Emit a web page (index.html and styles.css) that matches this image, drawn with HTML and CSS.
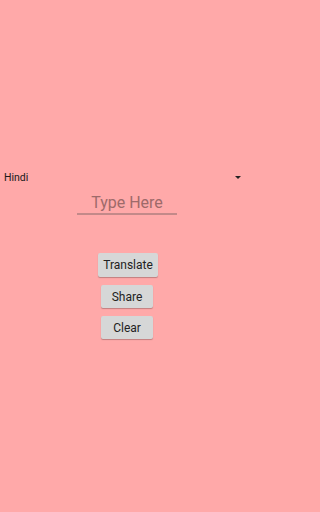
FILE: index.html
```html
<!DOCTYPE html>
<html>
<head>
<meta charset="utf-8">
<link rel="stylesheet" href="styles.css">
</head>
<body>
<div class="screen">
  <div class="spinner">
    <span class="spinner-label">Hindi</span>
    <span class="spinner-arrow"></span>
  </div>
  <div class="field">Type Here</div>
  <div class="actions">
    <button class="btn btn-wide">Translate</button>
    <button class="btn">Share</button>
    <button class="btn">Clear</button>
  </div>
</div>
</body>
</html>
```
FILE: styles.css
```css
html, body {
  margin: 0;
  padding: 0;
  background: #ffa9a9;
}
.screen {
  width: 254px;
  height: 512px;
  background: #ffa9a9;
  font-family: Roboto, "Liberation Sans", sans-serif;
  display: flex;
  flex-direction: column;
  padding-top: 168px;
  box-sizing: border-box;
}
.spinner {
  height: 20px;
  display: flex;
  align-items: center;
  justify-content: space-between;
  padding: 0 13px 0 4px;
}
.spinner-label {
  font-size: 10.5px;
  color: #1a1a1a;
  line-height: 20px;
}
.spinner-arrow {
  width: 0;
  height: 0;
  border-left: 3px solid transparent;
  border-right: 3px solid transparent;
  border-top: 3px solid #222;
  margin-top: -1px;
}
.field {
  width: 100px;
  margin: 4px auto 0;
  height: 21px;
  line-height: 21px;
  font-size: 16px;
  text-align: center;
  color: #9e6a6a;
  border-bottom: 2px solid #c38989;
}
.actions {
  display: flex;
  flex-direction: column;
  align-items: center;
  gap: 8px;
  margin-top: 38px;
}
.btn {
  font-family: Roboto, "Liberation Sans", sans-serif;
  font-size: 12px;
  color: #222;
  background: #d6d7d7;
  border: none;
  border-radius: 2px;
  min-width: 52px;
  height: 23px;
  padding: 0 5px;
  box-shadow: 0 1px 1px rgba(0,0,0,0.25);
}
.btn-wide {
  height: 24px;
  margin-left: 2px;
}
```
